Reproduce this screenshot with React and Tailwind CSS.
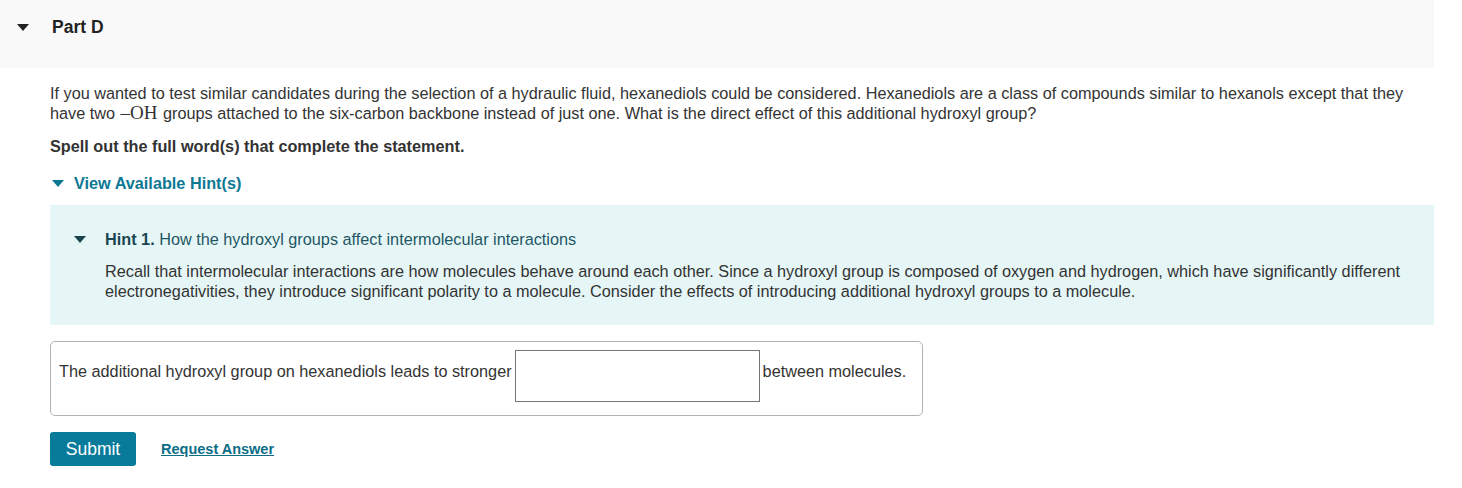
export default function App() {
  const Tri = ({ cls }) => (
    <svg width="12" height="7" viewBox="0 0 12 7" className={cls}>
      <polygon points="0,0 12,0 6,7" fill="currentColor" />
    </svg>
  );
  return (
    <div className="w-[1462px] h-[488px] bg-white text-[#333333] text-[16.25px] leading-[20px]" style={{ fontFamily: '"Liberation Sans", Arial, sans-serif' }}>
      <div className="w-[1434px] h-[68px] bg-[#f9f9f9] flex items-start pt-[17px]">
        <div className="w-[52px] flex pl-[17px] pt-[7px]">
          <Tri cls="text-[#222222]" />
        </div>
        <div className="font-bold text-[#222222] text-[17.5px]">Part D</div>
      </div>
      <div className="pl-[50px] w-[1434px] pt-[15px]">
        <p className="pr-[28px]">
          If you wanted to test similar candidates during the selection of a hydraulic fluid, hexanediols could be considered. Hexanediols are a class of compounds similar to hexanols except that they have two{' '}
          <span className="inline-block text-[19px] leading-[16px] mx-[1px]" style={{ fontFamily: '"Liberation Serif", "Times New Roman", serif' }}>–OH</span>{' '}
          groups attached to the six-carbon backbone instead of just one. What is the direct effect of this additional hydroxyl group?
        </p>
        <p className="font-bold mt-[13px]">Spell out the full word(s) that complete the statement.</p>
        <div className="flex items-center mt-[17px] text-[#0c7894] font-bold">
          <div className="w-[24px] flex pl-[2px]"><Tri cls="text-[#0c7894]" /></div>
          <span>View Available Hint(s)</span>
        </div>
        <div className="mt-[12px] bg-[#e6f6f7] pt-[24px] pb-[24px]">
          <div className="flex items-center">
            <div className="w-[55px] flex pl-[24px]"><Tri cls="text-[#1a4550]" /></div>
            <span className="text-[#1f5664]"><span className="font-bold text-[#1a4550]">Hint 1.</span> How the hydroxyl groups affect intermolecular interactions</span>
          </div>
          <p className="pl-[55px] pr-[24px] mt-[12px]">
            Recall that intermolecular interactions are how molecules behave around each other. Since a hydroxyl group is composed of oxygen and hydrogen, which have significantly different electronegativities, they introduce significant polarity to a molecule. Consider the effects of introducing additional hydroxyl groups to a molecule.
          </p>
        </div>
        <div className="mt-[16px] w-[873px] h-[75px] border border-[#b3b3b3] rounded-[5px] flex items-start pl-[8px] pt-[8px]">
          <span className="mt-[11px] mr-[3px]">The additional hydroxyl group on hexanediols leads to stronger</span>
          <div className="w-[245px] h-[52px] border border-[#767676] bg-white"></div>
          <span className="mt-[11px] ml-[3px]">between molecules.</span>
        </div>
        <div className="flex items-center mt-[16px]">
          <button className="w-[86px] h-[34px] bg-[#087b9a] text-white text-[17.5px] rounded-[3px]">Submit</button>
          <a className="ml-[25px] text-[#0c6d87] font-bold text-[14.5px] underline">Request Answer</a>
        </div>
      </div>
    </div>
  );
}
